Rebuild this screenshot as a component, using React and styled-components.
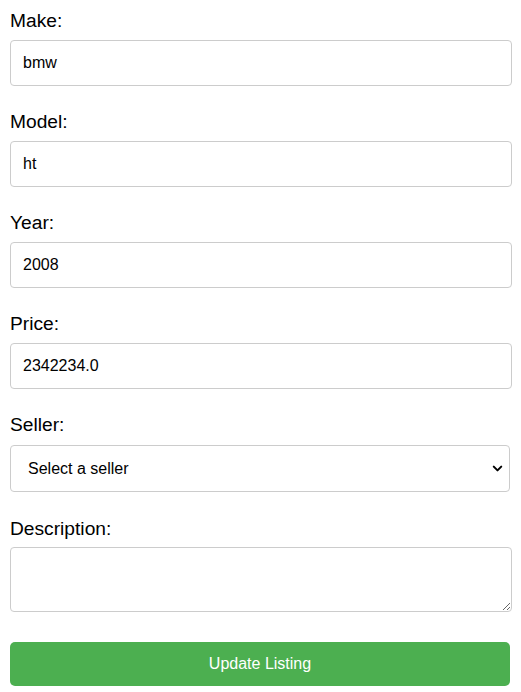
import React, { useState } from 'react'
import styled, { createGlobalStyle } from 'styled-components'
import { ChevronDown } from 'lucide-react'

const GlobalStyle = createGlobalStyle`
  body {
    margin: 0;
    background: #fff;
    font-family: "Liberation Sans", Arial, sans-serif;
    color: #000;
  }
`

export default function App() {
  let [make, setMake] = useState('bmw')
  let [model, setModel] = useState('ht')
  let [year, setYear] = useState('2008')
  let [price, setPrice] = useState('2342234.0')
  let [seller, setSeller] = useState('')
  let [description, setDescription] = useState('')

  return (
    <>
      <GlobalStyle />
      <Form onSubmit={e => e.preventDefault()}>
        <Field>
          <Label>Make:</Label>
          <Input type='text' value={make} onChange={e => setMake(e.target.value)} />
        </Field>
        <Field>
          <Label>Model:</Label>
          <Input type='text' value={model} onChange={e => setModel(e.target.value)} />
        </Field>
        <Field>
          <Label>Year:</Label>
          <Input type='number' value={year} onChange={e => setYear(e.target.value)} />
        </Field>
        <Field>
          <Label>Price:</Label>
          <Input type='text' value={price} onChange={e => setPrice(e.target.value)} />
        </Field>
        <Field $space={26}>
          <Label $space={9}>Seller:</Label>
          <SelectWrap>
            <Select value={seller} onChange={e => setSeller(e.target.value)}>
              <option value=''>Select a seller</option>
            </Select>
            <Arrow size={15} strokeWidth={3.2} />
          </SelectWrap>
        </Field>
        <Field $space={30}>
          <Label $space={7}>Description:</Label>
          <TextArea value={description} onChange={e => setDescription(e.target.value)} />
        </Field>
        <Button type='submit'>Update Listing</Button>
      </Form>
    </>
  )
}

const Form = styled.form`
  display: flex;
  flex-direction: column;
  width: 500px;
  padding: 10px 0 0 10px;
`

const Field = styled.div`
  display: flex;
  flex-direction: column;
  margin-bottom: ${p => p.$space ?? 25}px;
`

const Label = styled.label`
  font-size: 19.2px;
  line-height: 22px;
  margin-bottom: ${p => p.$space ?? 8}px;
`

const Input = styled.input`
  box-sizing: border-box;
  width: 502px;
  height: 46px;
  padding: 0 12px;
  border: 1px solid #ccc;
  border-radius: 4px;
  font-family: "Liberation Sans", Arial, sans-serif;
  font-size: 16px;
  color: #000;
  outline: none;

  &::-webkit-inner-spin-button,
  &::-webkit-outer-spin-button {
    -webkit-appearance: none;
    margin: 0;
  }
  -moz-appearance: textfield;
`

const SelectWrap = styled.div`
  position: relative;
  width: 500px;
`

const Select = styled.select`
  box-sizing: border-box;
  width: 500px;
  height: 47px;
  padding: 0 12px 0 17px;
  border: 1px solid #ccc;
  border-radius: 4px;
  background: #fff;
  appearance: none;
  -webkit-appearance: none;
  font-family: "Liberation Sans", Arial, sans-serif;
  font-size: 16px;
  color: #000;
`

const Arrow = styled(ChevronDown)`
  position: absolute;
  right: 5px;
  top: 16px;
  color: #000;
  pointer-events: none;
`

const TextArea = styled.textarea`
  box-sizing: border-box;
  width: 502px;
  height: 65px;
  padding: 12px;
  border: 1px solid #ccc;
  border-radius: 4px;
  font-family: "Liberation Sans", Arial, sans-serif;
  font-size: 16px;
  display: block;
`

const Button = styled.button`
  width: 500px;
  height: 44px;
  border: none;
  border-radius: 5px;
  background-color: #4caf50;
  color: #fff;
  font-family: "Liberation Sans", Arial, sans-serif;
  font-size: 16px;
  cursor: pointer;
`
